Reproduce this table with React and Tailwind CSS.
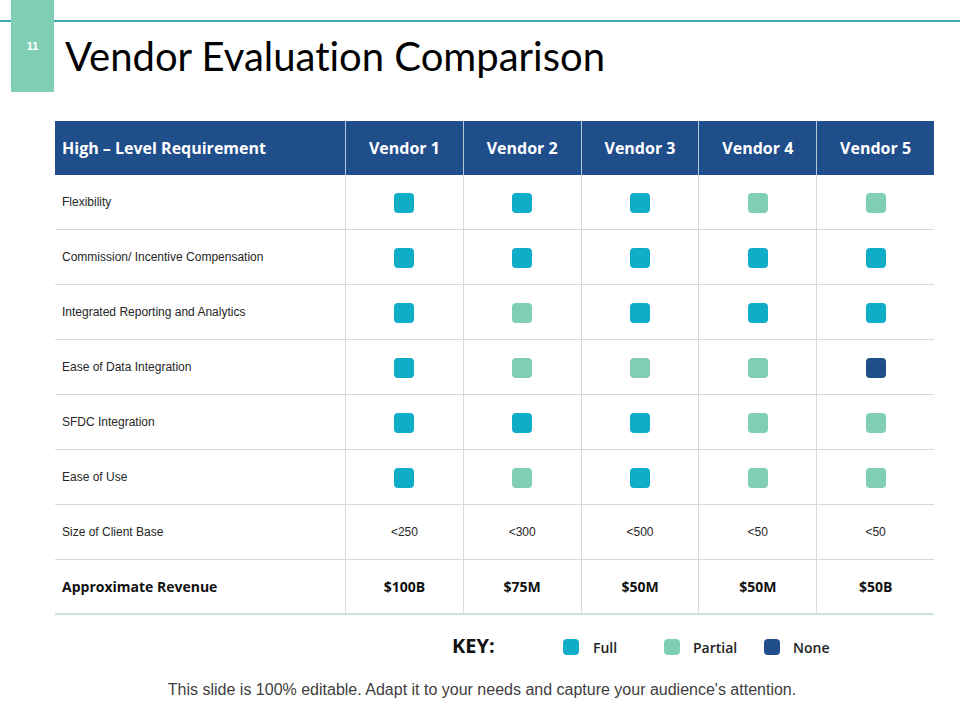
import React from 'react';

const FULL = 'F';
const PART = 'P';
const NONE = 'N';

const rows = [
  { label: 'Flexibility', marks: [FULL, FULL, FULL, PART, PART] },
  { label: 'Commission/ Incentive Compensation', marks: [FULL, FULL, FULL, FULL, FULL] },
  { label: 'Integrated Reporting and Analytics', marks: [FULL, PART, FULL, FULL, FULL] },
  { label: 'Ease of Data Integration', marks: [FULL, PART, PART, PART, NONE] },
  { label: 'SFDC Integration', marks: [FULL, FULL, FULL, PART, PART] },
  { label: 'Ease of Use', marks: [FULL, PART, FULL, PART, PART] },
];

const clientBase = ['<250', '<300', '<500', '<50', '<50'];
const revenue = ['$100B', '$75M', '$50M', '$50M', '$50B'];

const swatch = {
  F: 'bg-[#10adc8]',
  P: 'bg-[#80cfb5]',
  N: 'bg-[#1f4e8b]',
};

const sans = { fontFamily: '"Liberation Sans", Arial, sans-serif' };
const title = { fontFamily: 'Lato, "Open Sans", sans-serif' };
const head = { fontFamily: '"Open Sans", Lato, sans-serif' };

function Mark({ kind, size = 'w-[20px] h-[20px]' }) {
  return <div className={`${size} rounded-[4px] ${swatch[kind]}`} />;
}

export default function App() {
  return (
    <div className="w-[960px] h-[720px] bg-white overflow-hidden">
      {/* top bar */}
      <div className="flex h-[92px]">
        <div className="w-[11px] mt-[20px] border-t-2 border-[#3aa8b0]" />
        <div className="w-[43px] h-[92px] bg-[#80cfb5] flex justify-center pt-[38px]">
          <span className="text-white text-[11px] font-bold" style={sans}>11</span>
        </div>
        <div className="flex-1 flex flex-col">
          <div className="mt-[20px] border-t-2 border-[#3aa8b0]" />
          <h1
            className="ml-[11px] mt-[9px] text-[40px] leading-[50px] text-black font-normal [font-variant-ligatures:none]"
            style={title}
          >
            Vendor Evaluation Comparison
          </h1>
        </div>
      </div>

      {/* table */}
      <div className="ml-[55px] mt-[29px] w-[879px]">
        <div className="grid grid-cols-[290px_repeat(5,1fr)] h-[54px] bg-[#1f4e8b] text-white text-[16px] font-bold" style={head}>
          <div className="flex items-center pl-[7px]">High – Level Requirement</div>
          {[1, 2, 3, 4, 5].map((n) => (
            <div key={n} className="flex items-center justify-center border-l border-[#b9c6da]">
              Vendor {n}
            </div>
          ))}
        </div>

        {rows.map((row) => (
          <div key={row.label} className="grid grid-cols-[290px_repeat(5,1fr)] h-[55px] border-b border-[#d9d9d9]">
            <div className="flex items-center pl-[7px] text-[12px] text-[#262626]" style={sans}>
              {row.label}
            </div>
            {row.marks.map((m, i) => (
              <div key={i} className="flex items-center justify-center pt-[2px] border-l border-[#d9d9d9]">
                <Mark kind={m} />
              </div>
            ))}
          </div>
        ))}

        <div className="grid grid-cols-[290px_repeat(5,1fr)] h-[55px] border-b border-[#d9d9d9] text-[12px] text-[#262626]" style={sans}>
          <div className="flex items-center pl-[7px]">Size of Client Base</div>
          {clientBase.map((v, i) => (
            <div key={i} className="flex items-center justify-center border-l border-[#d9d9d9]">
              {v}
            </div>
          ))}
        </div>

        <div className="grid grid-cols-[290px_repeat(5,1fr)] h-[55px] border-b-2 border-[#c8e4de] text-[14px] font-bold text-[#111]" style={head}>
          <div className="flex items-center pl-[7px]">Approximate Revenue</div>
          {revenue.map((v, i) => (
            <div key={i} className="flex items-center justify-center border-l border-[#d9d9d9]">
              {v}
            </div>
          ))}
        </div>
      </div>

      {/* key */}
      <div className="flex items-center ml-[452px] mt-[16px] h-[32px]" style={head}>
        <span className="text-[20px] leading-[28px] font-bold text-[#111] w-[111px] -mt-[2px]">KEY:</span>
        <Mark kind={FULL} size="w-[16px] h-[16px]" />
        <span className="ml-[14px] w-[71px] text-[14px] font-semibold text-[#222]">Full</span>
        <Mark kind={PART} size="w-[16px] h-[16px]" />
        <span className="ml-[13px] w-[71px] text-[14px] font-semibold text-[#222]">Partial</span>
        <Mark kind={NONE} size="w-[16px] h-[16px]" />
        <span className="ml-[13px] text-[14px] font-semibold text-[#222]">None</span>
      </div>

      <p className="mt-[15px] text-center text-[16px] text-[#404040] pl-[4px]" style={sans}>
        This slide is 100% editable. Adapt it to your needs and capture your audience's attention.
      </p>
    </div>
  );
}
